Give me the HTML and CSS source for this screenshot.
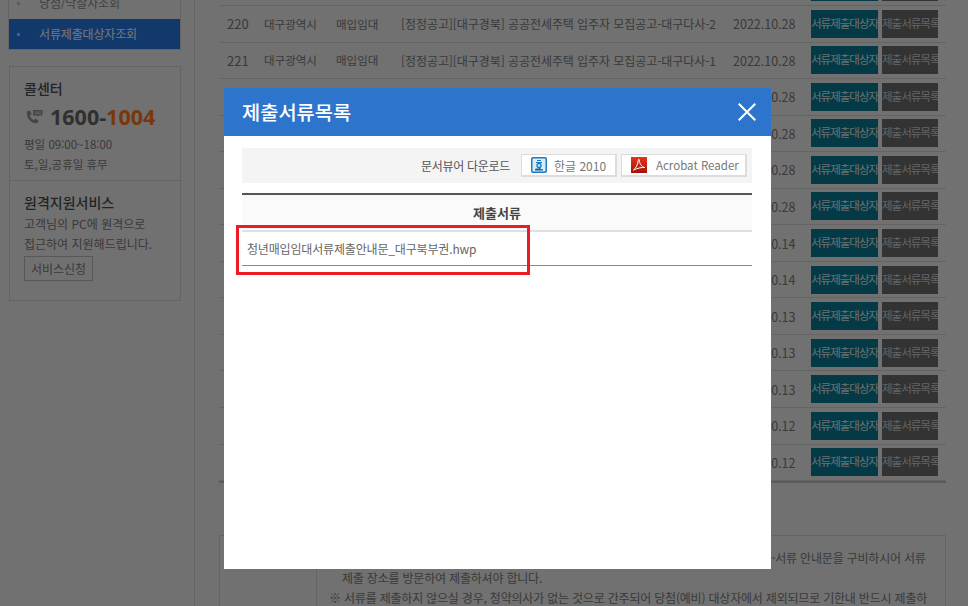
FILE: index.html
```html
<!DOCTYPE html>
<html lang="ko">
<head>
<meta charset="utf-8">
<title>제출서류목록</title>
<link rel="stylesheet" href="styles.css">
</head>
<body>
<div class="page">
  <aside class="side">
    <ul class="menu">
      <li class="menu-item">당첨/낙찰자조회</li>
      <li class="menu-item active">서류제출대상자조회</li>
    </ul>
    <section class="card">
      <div class="call">
        <h3 class="card-title">콜센터</h3>
        <div class="tel">
          <svg class="tel-icon" viewBox="0 0 18 14" width="18" height="14"><path d="M2.2 1.2 5 .4l1.6 3.5-1.7 1.5c.6 2 1.9 3.5 4 4.5l1.6-1.5 3 2-1 2.6C7 14.400 .4 8 2.200 1.200Z" fill="#8a8a8a"/><path d="M8 0h9.500v5.500h-3.500l-1.500 1.700v-1.700h-4.500z" fill="#8a8a8a"/><path d="M9.500 2h6.500M9.500 3.700h6.500" stroke="#e0e0e0" stroke-width=".7"/></svg>
          <span class="tel-num">1600-<em>1004</em></span>
        </div>
        <p class="hours">평일 09:00~18:00</p>
        <p class="hours">토,일,공휴일 휴무</p>
      </div>
      <div class="remote">
        <h3 class="card-title">원격지원서비스</h3>
        <p class="remote-text">고객님의 PC에 원격으로</p>
        <p class="remote-text">접근하여 지원해드립니다.</p>
        <button class="remote-btn">서비스신청</button>
      </div>
    </section>
  </aside>
  <main class="main">
    <div class="list">
      <div class="row"><span class="c-no">219</span><span class="c-area">대구광역시</span><span class="c-type">매입임대</span><span class="c-title">[정정공고][대구경북] 공공전세주택 입주자 모집공고-대구다사-3</span><span class="c-date">2022.10.28</span><a class="btn teal">서류제출대상자</a><a class="btn dark">제출서류목록</a></div>
      <div class="row"><span class="c-no">220</span><span class="c-area">대구광역시</span><span class="c-type">매입임대</span><span class="c-title">[정정공고][대구경북] 공공전세주택 입주자 모집공고-대구다사-2</span><span class="c-date">2022.10.28</span><a class="btn teal">서류제출대상자</a><a class="btn dark">제출서류목록</a></div>
      <div class="row"><span class="c-no">221</span><span class="c-area">대구광역시</span><span class="c-type">매입임대</span><span class="c-title">[정정공고][대구경북] 공공전세주택 입주자 모집공고-대구다사-1</span><span class="c-date">2022.10.28</span><a class="btn teal">서류제출대상자</a><a class="btn dark">제출서류목록</a></div>
      <div class="row"><span class="c-no">222</span><span class="c-area">대구광역시</span><span class="c-type">매입임대</span><span class="c-title">[대구경북] 청년 매입임대주택 입주자 모집공고</span><span class="c-date">2022.10.28</span><a class="btn teal">서류제출대상자</a><a class="btn dark">제출서류목록</a></div>
      <div class="row"><span class="c-no">223</span><span class="c-area">대구광역시</span><span class="c-type">매입임대</span><span class="c-title">[대구경북] 청년 매입임대주택 입주자 모집공고</span><span class="c-date">2022.10.28</span><a class="btn teal">서류제출대상자</a><a class="btn dark">제출서류목록</a></div>
      <div class="row"><span class="c-no">224</span><span class="c-area">대구광역시</span><span class="c-type">매입임대</span><span class="c-title">[대구경북] 청년 매입임대주택 입주자 모집공고</span><span class="c-date">2022.10.28</span><a class="btn teal">서류제출대상자</a><a class="btn dark">제출서류목록</a></div>
      <div class="row"><span class="c-no">225</span><span class="c-area">대구광역시</span><span class="c-type">매입임대</span><span class="c-title">[대구경북] 청년 매입임대주택 입주자 모집공고</span><span class="c-date">2022.10.28</span><a class="btn teal">서류제출대상자</a><a class="btn dark">제출서류목록</a></div>
      <div class="row"><span class="c-no">226</span><span class="c-area">대구광역시</span><span class="c-type">매입임대</span><span class="c-title">[대구경북] 청년 매입임대주택 입주자 모집공고</span><span class="c-date">2022.10.14</span><a class="btn teal">서류제출대상자</a><a class="btn dark">제출서류목록</a></div>
      <div class="row"><span class="c-no">227</span><span class="c-area">대구광역시</span><span class="c-type">매입임대</span><span class="c-title">[대구경북] 청년 매입임대주택 입주자 모집공고</span><span class="c-date">2022.10.14</span><a class="btn teal">서류제출대상자</a><a class="btn dark">제출서류목록</a></div>
      <div class="row"><span class="c-no">228</span><span class="c-area">대구광역시</span><span class="c-type">매입임대</span><span class="c-title">[대구경북] 청년 매입임대주택 입주자 모집공고</span><span class="c-date">2022.10.13</span><a class="btn teal">서류제출대상자</a><a class="btn dark">제출서류목록</a></div>
      <div class="row"><span class="c-no">229</span><span class="c-area">대구광역시</span><span class="c-type">매입임대</span><span class="c-title">[대구경북] 청년 매입임대주택 입주자 모집공고</span><span class="c-date">2022.10.13</span><a class="btn teal">서류제출대상자</a><a class="btn dark">제출서류목록</a></div>
      <div class="row"><span class="c-no">230</span><span class="c-area">대구광역시</span><span class="c-type">매입임대</span><span class="c-title">[대구경북] 청년 매입임대주택 입주자 모집공고</span><span class="c-date">2022.10.13</span><a class="btn teal">서류제출대상자</a><a class="btn dark">제출서류목록</a></div>
      <div class="row"><span class="c-no">231</span><span class="c-area">대구광역시</span><span class="c-type">매입임대</span><span class="c-title">[대구경북] 청년 매입임대주택 입주자 모집공고</span><span class="c-date">2022.10.12</span><a class="btn teal">서류제출대상자</a><a class="btn dark">제출서류목록</a></div>
      <div class="row"><span class="c-no">232</span><span class="c-area">대구광역시</span><span class="c-type">매입임대</span><span class="c-title">[대구경북] 청년 매입임대주택 입주자 모집공고</span><span class="c-date">2022.10.12</span><a class="btn teal">서류제출대상자</a><a class="btn dark">제출서류목록</a></div>
    </div>
    <section class="notice">
      <div class="notice-head"></div>
      <div class="notice-body">
        <p class="note first">※ 서류제출 대상자로 선정되신 분은 반드시 제출기한 내에 해당 모두 공고문 및 주택별 제출·서류 안내문을 구비하시어 서류</p>
        <p class="note indent">제출 장소를 방문하여 제출하셔야 합니다.</p>
        <p class="note">※ 서류를 제출하지 않으실 경우, 청약의사가 없는 것으로 간주되어 당첨(예비) 대상자에서 제외되므로 기한내 반드시 제출하</p>
      </div>
    </section>
  </main>
</div>

<div class="overlay"></div>

<div class="modal">
  <header class="modal-head">
    <h2 class="modal-title">제출서류목록</h2>
    <svg class="modal-close" viewBox="0 0 18 18" width="18" height="18"><path d="M.7.7l16.600 16.600M17.300.7.7 17.300" stroke="#fff" stroke-width="2" fill="none"/></svg>
  </header>
  <div class="modal-body">
    <div class="viewer">
      <span class="viewer-label">문서뷰어 다운로드</span>
      <a class="viewer-btn hwp">
        <svg class="viewer-icon" viewBox="0 0 16 16" width="16" height="16"><rect width="16" height="16" rx="2" fill="#1b7cc2"/><rect x="1.500" y="1.500" width="13" height="13" rx="1" fill="#d6ecf8"/><path d="M6 3.500h4M5 5.500h6" stroke="#1b7cc2" stroke-width="1.200"/><circle cx="8" cy="8.500" r="2" fill="none" stroke="#1b7cc2" stroke-width="1.300"/><path d="M9 10.500v1.500H4.500M4 12.800h8" stroke="#14609a" stroke-width="1.200" fill="none"/></svg>
        한글 2010
      </a>
      <a class="viewer-btn pdf">
        <svg class="viewer-icon" viewBox="0 0 16 16" width="16" height="16"><defs><linearGradient id="pdfg" x1="0" y1="0" x2="0" y2="1"><stop offset="0" stop-color="#e8321c"/><stop offset="1" stop-color="#a31405"/></linearGradient></defs><rect width="16" height="16" fill="url(#pdfg)"/><path d="M2.500 13C5 11.500 7 7 7.300 3c.1-1 1-.9 1 0 0 3.500 2.500 7 5.500 7.500-2.500-.3-7 .5-11.300 2.500Z" fill="none" stroke="#fff" stroke-width="1"/></svg>
        Acrobat Reader
      </a>
    </div>
    <div class="files">
      <div class="files-head">제출서류</div>
      <div class="files-row">청년매입임대서류제출안내문_대구북부권.hwp</div>
    </div>
  </div>
  <div class="highlight"></div>
</div>
</body>
</html>
```
FILE: styles.css
```css
* { box-sizing: border-box; }
html, body {
  margin: 0;
  height: 100%;
  overflow: hidden;
}
body {
  background: #e2e2e2;
  font-family: "Noto Sans CJK KR", "Noto Sans", sans-serif;
  color: #747474;
}
h2, h3, p, ul { margin: 0; padding: 0; list-style: none; }

.page {
  display: flex;
  margin-top: -40px;
  height: 660px;
}

/* sidebar */
.side {
  width: 195px;
  flex: none;
  padding: 28px 13px 0 8px;
  border-right: 1px solid #c8c8c8;
}
.menu { border: 1px solid #c8c8c8; border-top: 0; }
.menu-item {
  height: 30px;
  line-height: 30px;
  padding-left: 30px;
  font-size: 12px;
  letter-spacing: -.15px;
  color: #808080;
  position: relative;
}
.menu-item::before {
  content: "";
  position: absolute;
  left: 8px;
  top: 14px;
  width: 3px;
  height: 3px;
  background: #b8b8b8;
}
.menu-item.active {
  margin-top: 1px;
  background: #2272d8;
  color: #f0f0f0;
}
.card {
  margin-top: 16px;
  margin-left: 1px;
  border: 1px solid #c8c8c8;
  height: 235px;
}
.call {
  height: 114px;
  padding: 11px 14px 0;
  border-bottom: 1px solid #c8c8c8;
}
.card-title {
  font-size: 14px;
  font-weight: 500;
  line-height: 20px;
  color: #484848;
}
.tel {
  display: flex;
  align-items: center;
  gap: 7px;
  margin-top: 5px;
  height: 28px;
}
.tel-icon { margin-left: 1px; }
.tel-num {
  font-size: 21.500px;
  font-weight: 700;
  line-height: 28px;
  color: #606060;
  font-family: "Open Sans", "Noto Sans CJK KR", sans-serif;
}
.tel-num em { font-style: normal; color: #f07018; }
.hours {
  font-size: 11.500px;
  line-height: 20px;
  color: #747474;
}
.tel + .hours { margin-top: 3px; }
.remote { padding: 11px 14px 0; }
.remote-text {
  font-size: 12px;
  line-height: 20px;
  color: #747474;
}
.card-title + .remote-text { margin-top: 2px; }
.remote-btn {
  display: block;
  margin-top: 2px;
  width: 69px;
  height: 25px;
  padding: 0;
  background: transparent;
  border: 1px solid #b0b0b0;
  font: 12px "Noto Sans CJK KR", sans-serif;
  color: #747474;
}

/* list */
.main {
  flex: 1;
  padding: 9.450px 22px 0 24px;
  min-width: 0;
}
.list { border-bottom: 2px solid #b6b6b6; }
.row {
  display: grid;
  grid-template-columns: 45px 72px 65px 332px 78px 67px 60px;
  align-items: center;
  height: 36.550px;
  border-bottom: 1px solid #c8c8c8;
  font-size: 11.500px;
  color: #747474;
  white-space: nowrap;
}
.c-no { padding-left: 8px; font-size: 13px; }
.c-date { font-size: 12.500px; }
.c-title { font-size: 12px; letter-spacing: -.07px; }
.btn {
  display: block;
  height: 28px;
  line-height: 27px;
  font-size: 11.500px;
  text-align: center;
  overflow: hidden;
  letter-spacing: -1px;
}
.btn.teal { background: #08748c; color: #d8e0e0; }
.btn.dark { background: #666; margin-left: 4px; width: 56px; color: #c8c8c8; }

/* notice */
.notice {
  display: flex;
  margin-top: 52px;
  height: 100px;
  border: 1px solid #c8c8c8;
}
.notice-head { width: 97px; border-right: 1px solid #c8c8c8; }
.notice-body { padding: 12px 0 0 12px; white-space: nowrap; }
.note {
  font-size: 12px;
  letter-spacing: -.2px;
  line-height: 20px;
  color: #747474;
}
.note.indent { padding-left: 13px; }

/* overlay + dialog */
.overlay {
  position: fixed;
  inset: 0;
  background: rgba(0, 0, 0, .5);
}
.modal {
  position: fixed;
  left: 224px;
  top: 88px;
  width: 547px;
  height: 481px;
  background: #fff;
  color: #555;
}
.modal-head {
  display: flex;
  align-items: center;
  justify-content: space-between;
  height: 48px;
  padding: 0 15px 0 18px;
  background: #2d74cc;
}
.modal-title {
  font-size: 19.800px;
  font-weight: 500;
  line-height: 48px;
  color: #fff;
}
.modal-body { padding: 12px 19px 0 18px; }
.viewer {
  display: flex;
  align-items: center;
  justify-content: flex-end;
  height: 35px;
  padding-right: 5px;
  background: #f4f4f4;
  gap: 4px;
}
.viewer-label {
  font-size: 12px;
  letter-spacing: -.3px;
  color: #555;
  margin-right: 7px;
}
.viewer-btn {
  display: flex;
  align-items: center;
  height: 23px;
  background: #fff;
  border: 1px solid #dcdcdc;
  border-width: 1px 2px 2px 1px;
  font-size: 12px;
  color: #777;
  padding-left: 9px;
  gap: 7px;
  white-space: nowrap;
}
.viewer-btn.hwp { width: 96px; }
.viewer-btn.pdf { width: 126px; gap: 9px; font-size: 11.500px; }
.viewer-icon { flex: none; }
.files {
  margin-top: 10px;
  border-top: 2px solid #555;
}
.files-head {
  height: 37px;
  line-height: 36px;
  text-align: center;
  font-size: 13px;
  font-weight: 700;
  color: #444;
  background: #fafafa;
  border-bottom: 2px solid #e0e0e0;
}
.files-row {
  height: 34px;
  line-height: 34px;
  padding-left: 5px;
  font-size: 12px;
  letter-spacing: -.17px;
  color: #666;
  border-bottom: 1px solid #888;
}
.highlight {
  position: absolute;
  left: 12px;
  top: 137px;
  width: 294px;
  height: 50px;
  border: 3px solid #ed1c24;
}
```
